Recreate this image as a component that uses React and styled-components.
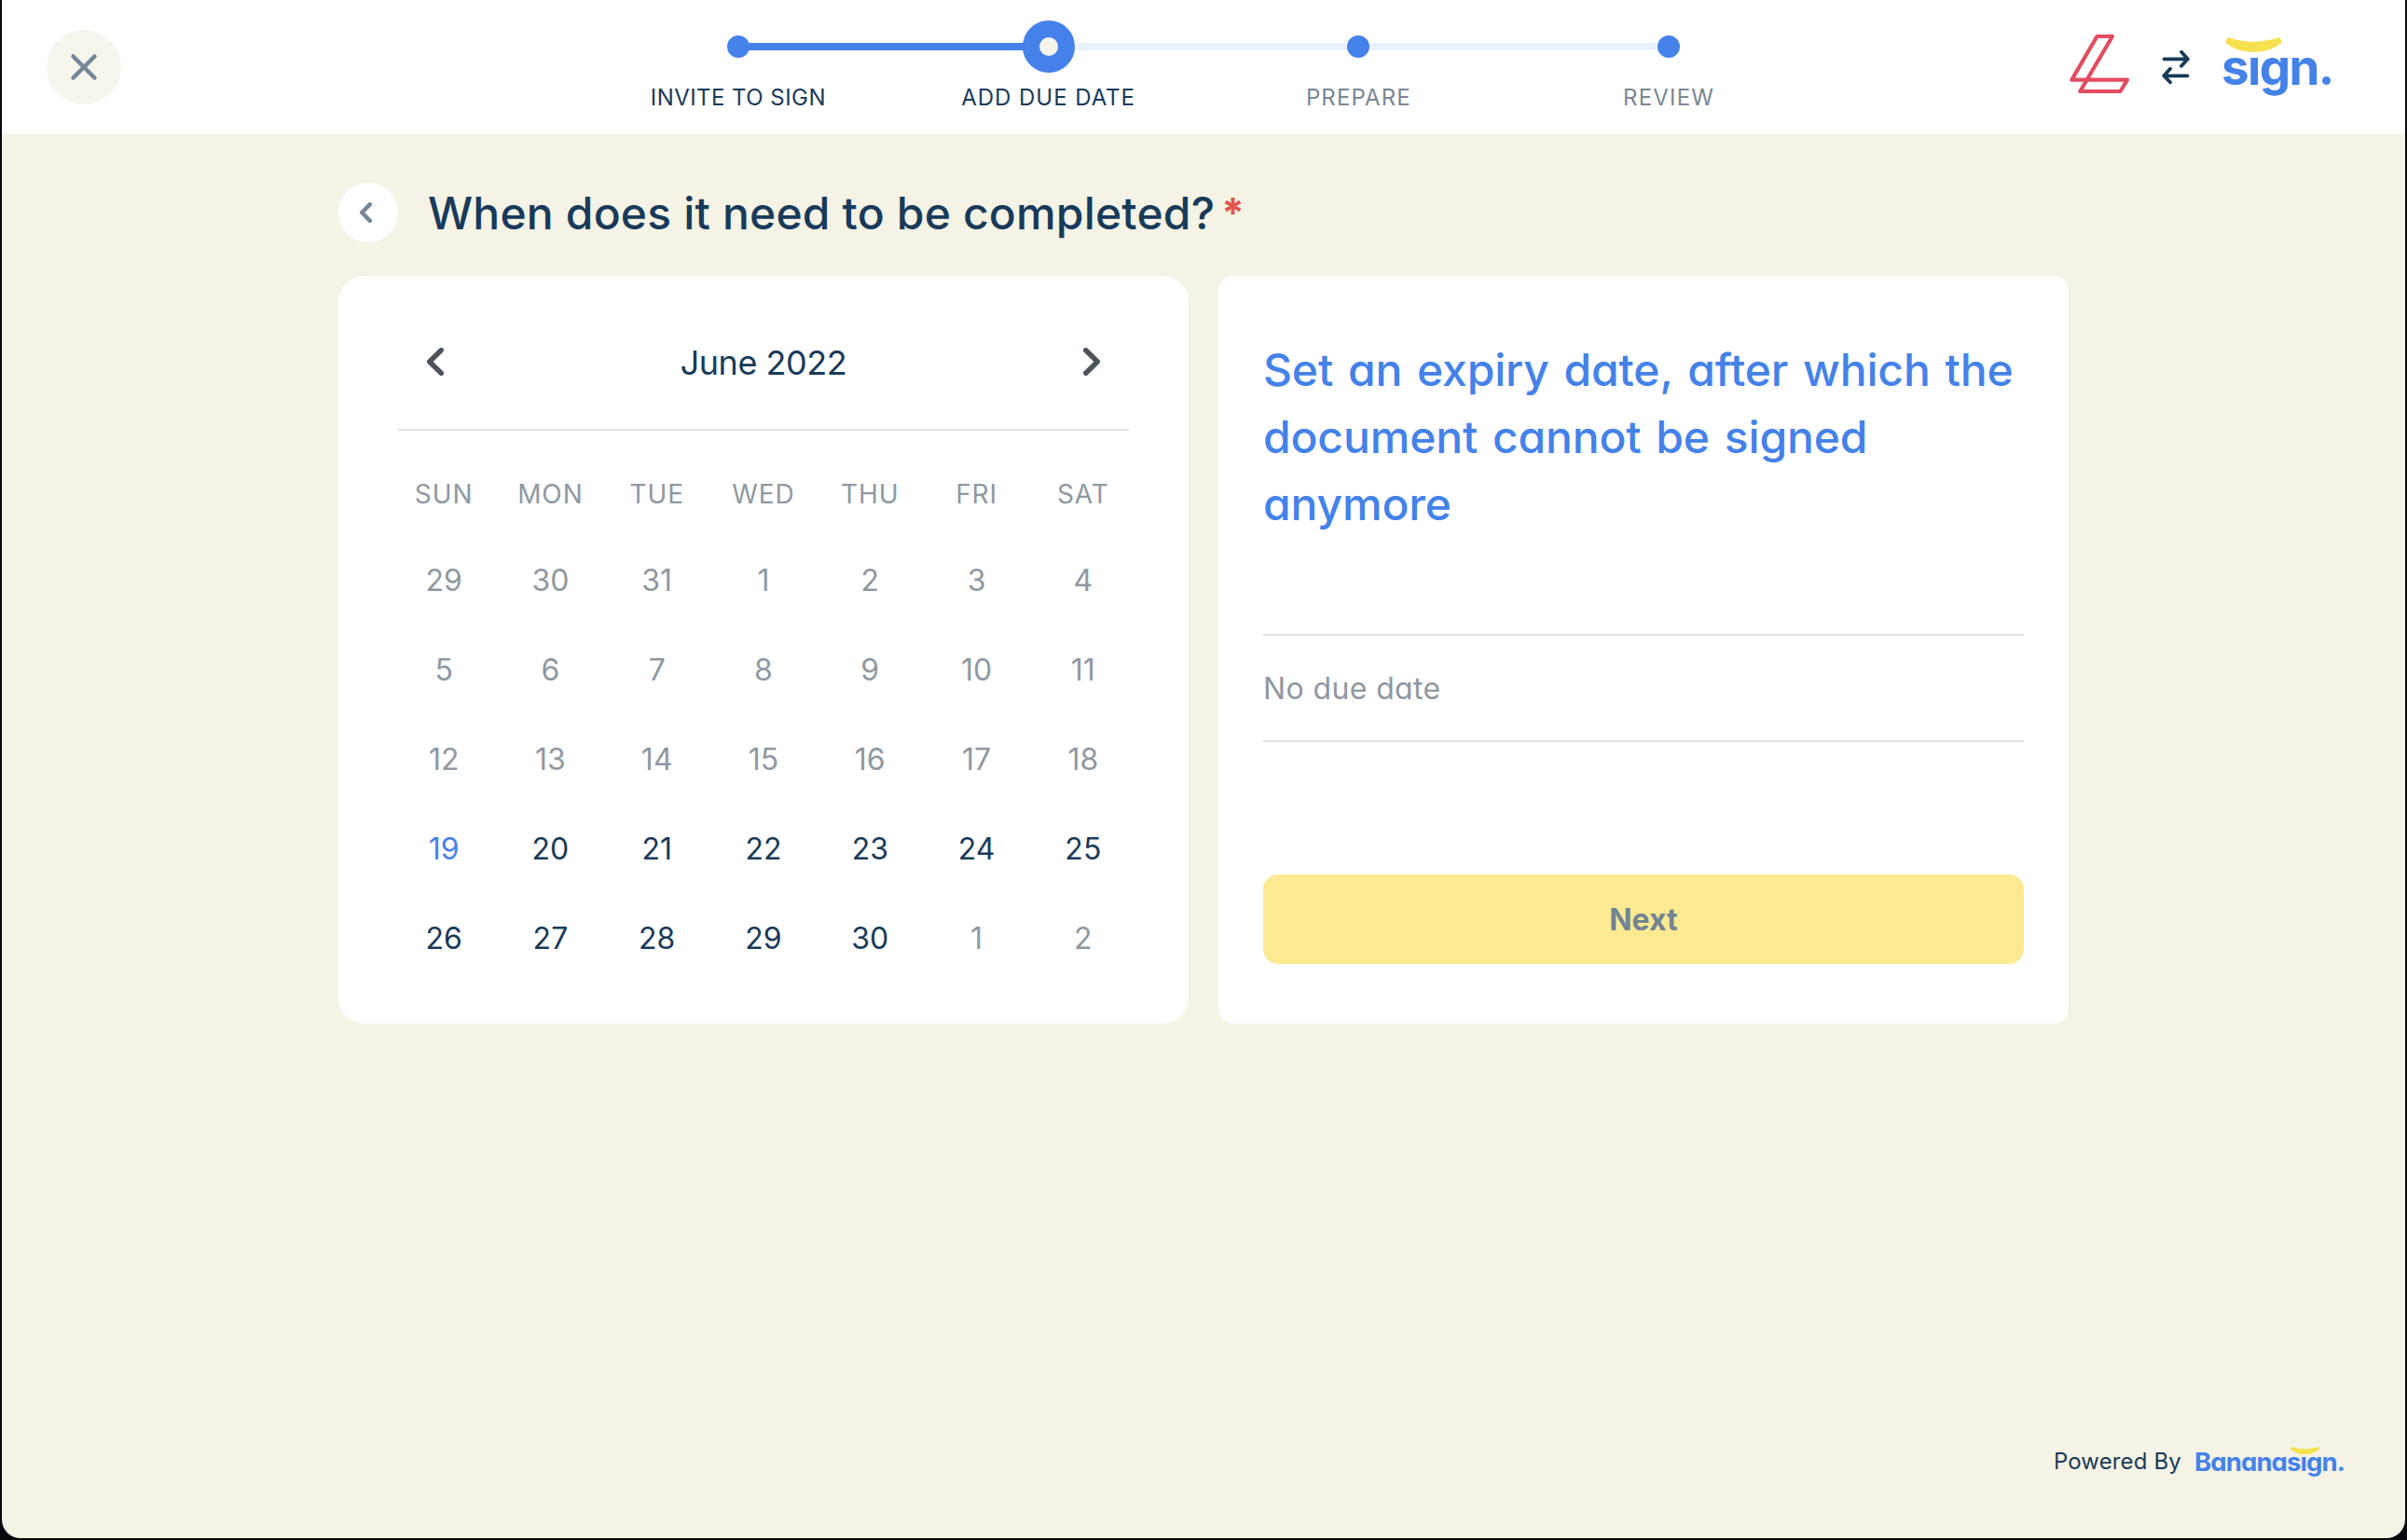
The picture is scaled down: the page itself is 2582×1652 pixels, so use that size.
import React from "react";
import styled, { createGlobalStyle } from "styled-components";

const color = {
  navy: "#183a5a",
  blue: "#4482e9",
  track: "#eaf1fe",
  slate: "#748699",
  muted: "#8f98a1",
  cream: "#f5f3e5",
  rule: "#e0e0e0",
  banana: "#f7e04e",
  frame: "#08060f",
};

const GlobalStyle = createGlobalStyle`
  *, *::before, *::after { box-sizing: border-box; }
  body { margin: 0; background: ${color.frame}; }
  button { border: 0; padding: 0; margin: 0; background: none; font: inherit; letter-spacing: inherit; color: inherit; }
`;

const Frame = styled.div`
  height: 1652px;
  padding: 0 2px 2px;
  background: ${color.frame};
  font-family: Inter, Lato, "Liberation Sans", sans-serif;
  font-feature-settings: "cv11";
  font-weight: 400;
  color: ${color.navy};
`;

const Page = styled.div`
  height: 100%;
  display: flex;
  flex-direction: column;
  background: ${color.cream};
  border-radius: 0 0 20px 20px;
  overflow: hidden;
`;

const Header = styled.header`
  flex: none;
  height: 144px;
  display: grid;
  grid-template-columns: 1fr 1331px 1fr;
  align-items: start;
  background: #fff;
`;

const CloseButton = styled.button`
  width: 80px;
  height: 80px;
  margin: 32px 0 0 48px;
  display: grid;
  place-items: center;
  border-radius: 50%;
  background: #f6f5ec;
`;

const Stepper = styled.ol`
  list-style: none;
  margin: 0;
  padding: 22px 0 0;
  display: grid;
  grid-template-columns: repeat(4, 1fr);
`;

const Step = styled.li`
  display: flex;
  flex-direction: column;
  align-items: center;
`;

const Rail = styled.div`
  width: 100%;
  height: 56px;
  display: flex;
  align-items: center;
`;

const tones = { none: "transparent", done: color.blue, todo: color.track };

const Segment = styled.span`
  flex: 1;
  height: 8px;
  margin: 0 -1px;
  background: ${(p) => tones[p.$tone]};
`;

const Dot = styled.span`
  width: ${(p) => (p.$active ? 56 : 24)}px;
  height: ${(p) => (p.$active ? 56 : 24)}px;
  border: ${(p) => (p.$active ? 18 : 12)}px solid ${color.blue};
  border-radius: 50%;
  background: #f6f5ec;
  z-index: 1;
`;

const StepLabel = styled.span`
  margin-top: 11px;
  font-size: 24px;
  line-height: 32px;
  letter-spacing: ${(p) => p.$spacing}px;
  text-transform: uppercase;
  color: ${(p) => (p.$reached ? color.navy : "#7a8693")};
`;

const Brands = styled.div`
  display: flex;
  align-items: flex-start;
  justify-content: flex-end;
  padding: 36px 76px 0 0;
`;

const SwapIcon = styled.svg`
  margin: 17px 32px 0 33px;
`;

const Wordmark = styled.span`
  position: relative;
  display: block;
  width: ${(p) => p.$width}px;
  font-size: ${(p) => p.$size}px;
  line-height: ${(p) => p.$line}px;
  letter-spacing: ${(p) => p.$spacing}px;
  font-weight: 700;
  color: ${color.blue};
  white-space: nowrap;
`;

const Smile = styled.svg`
  position: absolute;
  left: ${(p) => p.$left}px;
  top: ${(p) => p.$top}px;
`;

const Main = styled.main`
  width: 1856px;
  margin: 52px auto 0;
`;

const TitleRow = styled.div`
  height: 64px;
  display: flex;
  align-items: center;
`;

const BackButton = styled.button`
  width: 64px;
  height: 64px;
  margin-right: 32px;
  padding-right: 6px;
  display: grid;
  place-items: center;
  border-radius: 50%;
  background: #fff;
`;

const Title = styled.h1`
  margin: 0;
  padding-top: 2px;
  font-size: 48px;
  line-height: 64px;
  font-weight: 500;
  letter-spacing: 0.18px;
`;

const Required = styled.span`
  margin-left: 7px;
  font-size: 44px;
  line-height: 0;
  vertical-align: 2px;
  font-weight: 700;
  color: #e0564f;
`;

const Cards = styled.div`
  margin-top: 36px;
  display: grid;
  grid-template-columns: 1fr 1fr;
  gap: 32px;
`;

const Card = styled.section`
  height: 802px;
  padding: ${(p) => p.$pad};
  background: #fff;
  border-radius: ${(p) => p.$radius}px;
`;

const MonthBar = styled.div`
  height: 166px;
  margin: 0 8px;
  padding: 56px 0 36px;
  display: grid;
  grid-template-columns: 80px 1fr 80px;
  align-items: center;
  border-bottom: 2px solid ${color.rule};
`;

const MonthButton = styled.button`
  height: 72px;
  display: grid;
  place-items: center;
`;

const MonthName = styled.h2`
  margin: 0;
  padding-top: 2px;
  text-align: center;
  font-size: 36px;
  line-height: 70px;
  font-weight: 400;
  letter-spacing: -0.45px;
`;

const Grid = styled.div`
  display: grid;
  grid-template-columns: repeat(7, 1fr);
  text-align: center;
`;

const Weekdays = styled(Grid)`
  margin: 38px 0 14px;
  font-size: 28px;
  line-height: 60px;
  letter-spacing: 0.9px;
  color: ${color.muted};
`;

const dayTones = { off: color.muted, today: color.blue, open: color.navy };

const Day = styled.button`
  height: 96px;
  font-size: 32px;
  color: ${(p) => dayTones[p.$tone]};
`;

const Prompt = styled.p`
  margin: 0;
  padding-top: 1px;
  height: 216px;
  font-size: 48px;
  line-height: 72px;
  font-weight: 500;
  letter-spacing: -0.15px;
  word-spacing: 3.2px;
  color: ${color.blue};
`;

const DueDate = styled.div`
  margin-top: 104px;
  height: 116px;
  padding-top: 1px;
  border-top: 2px solid ${color.rule};
  border-bottom: 2px solid ${color.rule};
  font-size: 32px;
  line-height: 112px;
  letter-spacing: 0.38px;
  color: ${color.muted};
`;

const NextButton = styled.button`
  width: 100%;
  height: 96px;
  margin-top: 142px;
  border-radius: 16px;
  background: #fbea91;
  font-size: 32px;
  font-weight: 700;
  color: #748494;
`;

const Footer = styled.footer`
  margin-top: auto;
  padding: 0 64px 62px 0;
  display: flex;
  justify-content: flex-end;
  font-size: 24px;
  line-height: 40px;
`;

const PoweredBy = styled.span`
  margin-right: 14px;
  letter-spacing: 0.15px;
`;

function BananaMark({ width, left, top }) {
  return (
    <Smile $left={left} $top={top} width={width} height={width * 0.262} viewBox="0 0 61 16">
      <path d="M2.5 0Q30 9.5 58.5 0L61 5.5Q49 16 30 16Q12 16 0 5.5Z" fill={color.banana} />
    </Smile>
  );
}

function Chevron({ width, height, stroke, tint, flip }) {
  const e = stroke / 2;
  const d = flip
    ? `M${e} ${e}L${width - e} ${height / 2}L${e} ${height - e}`
    : `M${width - e} ${e}L${e} ${height / 2}L${width - e} ${height - e}`;
  return (
    <svg width={width} height={height} fill="none" stroke={tint} strokeWidth={stroke} strokeLinecap="round" strokeLinejoin="round">
      <path d={d} />
    </svg>
  );
}

const steps = [
  { label: "Invite to sign", before: "none", after: "done", reached: true, spacing: 0.45 },
  { label: "Add due date", before: "done", after: "todo", reached: true, active: true, spacing: 0.95 },
  { label: "Prepare", before: "todo", after: "todo", spacing: 1.1 },
  { label: "Review", before: "todo", after: "none", spacing: 1.2 },
];

const weekdays = ["SUN", "MON", "TUE", "WED", "THU", "FRI", "SAT"];

const days = Array.from({ length: 35 }, (_, i) => {
  const date = new Date(2022, 4, 29 + i);
  const n = date.getDate();
  const inMonth = date.getMonth() === 5;
  return { n, tone: inMonth && n === 19 ? "today" : inMonth && n > 19 ? "open" : "off" };
});

export default function App() {
  return (
    <Frame>
      <GlobalStyle />
      <Page>
        <Header>
          <CloseButton aria-label="Close">
            <svg width="30" height="30" fill="none" stroke={color.slate} strokeWidth="4.5" strokeLinecap="round">
              <path d="M3.5 3.5L26.5 26.5M26.5 3.5L3.5 26.5" />
            </svg>
          </CloseButton>
          <Stepper>
            {steps.map((s) => (
              <Step key={s.label}>
                <Rail>
                  <Segment $tone={s.before} />
                  <Dot $active={s.active} />
                  <Segment $tone={s.after} />
                </Rail>
                <StepLabel $reached={s.reached} $spacing={s.spacing}>{s.label}</StepLabel>
              </Step>
            ))}
          </Stepper>
          <Brands>
            <svg width="66" height="66" fill="none" stroke="#e24b60" strokeWidth="4.2" strokeLinejoin="round">
              <path d="M29.5 3H46L11.3 62H54.5L62 49.7H2.3L29.5 3Z" />
            </svg>
            <SwapIcon width="32" height="38" fill="none" stroke={color.navy} strokeWidth="3.8" strokeLinecap="round" strokeLinejoin="round">
              <path d="M2.5 10.3H27.5M21 2.8L27.8 10.3L21 17.8M27.5 28.3H2.5M9 20.8L2.2 28.3L9 35.3" />
            </SwapIcon>
            <Wordmark $width={121} $size={53} $line={73} $spacing={-1.7}>
              sıgn.
              <BananaMark width={61} left={4} top={4} />
            </Wordmark>
          </Brands>
        </Header>

        <Main>
          <TitleRow>
            <BackButton aria-label="Back">
              <Chevron width={13} height={22} stroke={4.5} tint={color.slate} />
            </BackButton>
            <Title>
              When does it need to be completed?<Required>*</Required>
            </Title>
          </TitleRow>
          <Cards>
            <Card $pad="0 56px" $radius={28}>
              <MonthBar>
                <MonthButton aria-label="Previous month">
                  <Chevron width={18} height={30} stroke={5.5} tint="#4c535b" />
                </MonthButton>
                <MonthName>June 2022</MonthName>
                <MonthButton aria-label="Next month">
                  <Chevron width={18} height={30} stroke={5.5} tint="#4c535b" flip />
                </MonthButton>
              </MonthBar>
              <Weekdays>
                {weekdays.map((d) => <span key={d}>{d}</span>)}
              </Weekdays>
              <Grid>
                {days.map((d, i) => <Day key={i} $tone={d.tone}>{d.n}</Day>)}
              </Grid>
            </Card>
            <Card $pad="64px 48px" $radius={16}>
              <Prompt>Set an expiry date, after which the document cannot be signed anymore</Prompt>
              <DueDate>No due date</DueDate>
              <NextButton>Next</NextButton>
            </Card>
          </Cards>
        </Main>

        <Footer>
          <PoweredBy>Powered By</PoweredBy>
          <Wordmark $width={162} $size={27.5} $line={40} $spacing={-0.9}>
            Bananasıgn.
            <BananaMark width={31} left={103} top={4} />
          </Wordmark>
        </Footer>
      </Page>
    </Frame>
  );
}
